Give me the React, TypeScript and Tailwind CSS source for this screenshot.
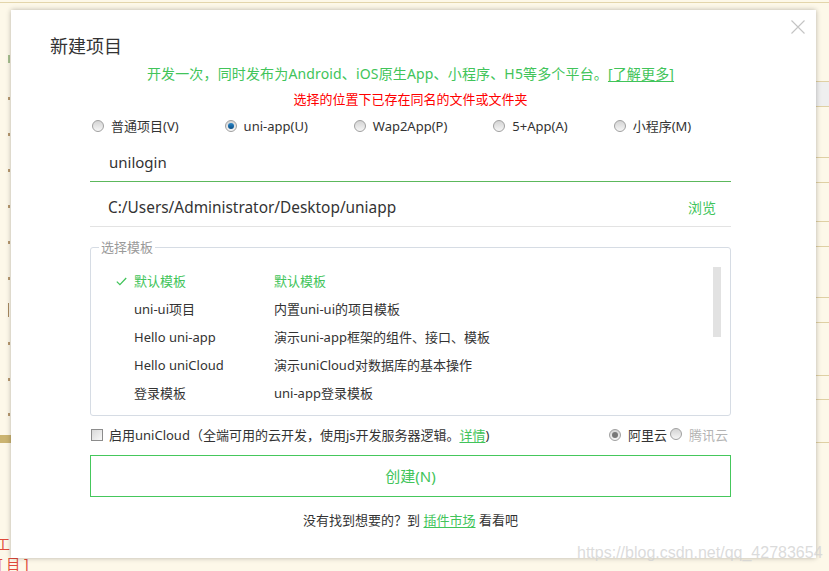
import React from "react";

function Radio({ checked, gray }: { checked?: boolean; gray?: boolean }) {
  return (
    <span className="inline-flex h-[12px] w-[12px] shrink-0 items-center justify-center rounded-full border border-[#a0a0a0] bg-linear-to-b from-[#d4d4d4] to-[#f6f6f6]">
      {checked && (
        <span
          className={
            gray
              ? "h-[6px] w-[6px] rounded-full bg-[#777777]"
              : "h-[6px] w-[6px] rounded-full bg-linear-to-b from-[#2a86c8] to-[#0b4f86]"
          }
        />
      )}
    </span>
  );
}

const templates: [string, string, boolean][] = [
  ["默认模板", "默认模板", true],
  ["uni-ui项目", "内置uni-ui的项目模板", false],
  ["Hello uni-app", "演示uni-app框架的组件、接口、模板", false],
  ["Hello uniCloud", "演示uniCloud对数据库的基本操作", false],
  ["登录模板", "uni-app登录模板", false],
];

const rightLines = [81, 106, 157, 182, 221, 246, 297, 322, 375, 399, 442];
const leftMarks = [97, 133, 169, 205, 241, 277, 342, 378, 413];

export default function App() {
  return (
    <div className="relative h-[571px] w-[829px] overflow-hidden bg-[#fdf8e9] font-['Noto_Sans','Noto_Sans_CJK_SC',sans-serif] text-[#333]">
      {/* background page decorations */}
      <div className="absolute left-0 right-0 top-[2px] h-px bg-[#e3d5ab]" />
      <div className="absolute left-[816px] right-0 top-[82px] h-[24px] bg-[#efefef]" />
      {rightLines.map((y) => (
        <div key={y} className="absolute left-[816px] right-0 h-px bg-[#dfd0a4]" style={{ top: y }} />
      ))}
      {leftMarks.map((y) => (
        <div key={y} className="absolute left-[8px] h-[3px] w-[2px] bg-[#b89a70]" style={{ top: y }} />
      ))}
      <div className="absolute left-[8px] top-[55px] h-[8px] w-[2px] bg-[#a8c090]" />
      <div className="absolute left-[8px] top-[303px] h-[14px] w-[1px] bg-[#a88a60]" />
      <div className="absolute left-0 top-[435px] h-[8px] w-[11px] bg-[#cbb471]" />
      <div className="absolute left-[-4px] top-[535px] text-[14px] leading-[18px] text-[#e04a3a]">工</div>
      <div className="absolute left-[-2px] top-[555px] text-[14px] leading-[18px] text-[#e04a3a]">[ 目 ]</div>

      {/* dialog */}
      <div className="absolute left-[11px] top-[10px] h-[548px] w-[805px] bg-white shadow-[0_0_5px_rgba(0,0,0,0.28)]">
        <div className="absolute right-[11px] top-[10px] h-[14px] w-[14px]">
          <svg width="14" height="14" viewBox="0 0 14 14">
            <path d="M0.5 0.5 L13.5 13.5 M13.5 0.5 L0.5 13.5" stroke="#c4c4c4" strokeWidth="1.1" fill="none" />
          </svg>
        </div>

        <div className="pl-[39px] pt-[24px] text-[18px] leading-[24px] text-[#333]">新建项目</div>

        <div className="ml-[79px] w-[641px]">
          <p className="mt-[6px] text-center text-[14px] leading-[20px] tracking-[0.15px] text-[#41c45a]">
            开发一次，同时发布为Android、iOS原生App、小程序、H5等多个平台。<span className="underline underline-offset-2">[了解更多]</span>
          </p>
          <p className="mt-[5px] text-center text-[13px] leading-[20px] text-[#ff0000]">选择的位置下已存在同名的文件或文件夹</p>

          <div className="mt-[7px] flex h-[20px] items-center gap-[46px] pl-[2px] text-[13px]">
            {[
              ["普通项目(V)", false],
              ["uni-app(U)", true],
              ["Wap2App(P)", false],
              ["5+App(A)", false],
              ["小程序(M)", false],
            ].map(([label, checked]) => (
              <div key={label as string} className="flex items-center gap-[7px]">
                <Radio checked={checked as boolean} />
                <span className="leading-[20px]">{label as string}</span>
              </div>
            ))}
          </div>

          <div className="mt-[7px] flex h-[39px] items-center border-b border-[#5cb85c] pl-[19px] text-[15px] leading-[20px]">
            unilogin
          </div>

          <div className="flex items-start justify-between border-b border-[#e3e3e3] pb-[8px] pl-[18px] pr-[15px] pt-[16px] text-[15.4px] leading-[20px]">
            <span>C:/Users/Administrator/Desktop/uniapp</span>
            <span className="text-[14px] text-[#41c45a]">浏览</span>
          </div>

          <fieldset className="mt-[10px] rounded-[3px] border border-[#d6dce4] p-0">
            <legend className="ml-[8px] px-[2px] text-[13px] leading-[20px] text-[#9a9a9a]">选择模板</legend>
            <div className="relative pb-[8px] pt-[10px] text-[13px]">
              <div className="absolute right-[9px] top-[10px] h-[70px] w-[8px] bg-[#e2e2e2]" />
              {templates.map(([a, b, sel]) => (
                <div
                  key={a}
                  className={sel ? "flex h-[28px] items-center pl-[25px] text-[#41c45a]" : "flex h-[28px] items-center pl-[25px]"}
                >
                  <span className="flex w-[18px] items-center">
                    {sel && (
                      <svg width="11" height="9" viewBox="0 0 11 9">
                        <path d="M0.8 4.6 L3.9 7.6 L10.2 1" stroke="#41c45a" strokeWidth="1.3" fill="none" />
                      </svg>
                    )}
                  </span>
                  <span className="w-[140px] leading-[20px]">{a}</span>
                  <span className="leading-[20px]">{b}</span>
                </div>
              ))}
            </div>
          </fieldset>

          <div className="mt-[9px] flex h-[20px] items-center justify-between pr-[3px] text-[13px] leading-[20px]">
            <div className="flex items-center">
              <span className="ml-px h-[12px] w-[12px] border border-[#8c8c8c] bg-linear-to-br from-[#d8d8d8] to-[#f8f8f8]" />
              <span className="ml-[6px]">
                启用uniCloud（全端可用的云开发，使用js开发服务器逻辑。<span className="text-[#41c45a] underline underline-offset-2">详情</span>)
              </span>
            </div>
            <div className="flex items-center">
              <Radio checked gray />
              <span className="ml-[7px]">阿里云</span>
              <span className="ml-[3px]"><Radio /></span>
              <span className="ml-[7px] text-[#b4b4b4]">腾讯云</span>
            </div>
          </div>

          <div className="mt-[10px] flex h-[42px] items-center justify-center border border-[#45c75c] text-[15px] text-[#41c45a]">
            创建(N)
          </div>

          <p className="mt-[13px] text-center text-[13px] leading-[20px]">
            没有找到想要的？到 <span className="text-[#41c45a] underline underline-offset-2">插件市场</span> 看看吧
          </p>
        </div>
      </div>

      <div className="pointer-events-none absolute left-[577px] top-[543px] font-['Liberation_Sans',sans-serif] text-[16px] leading-[20px] text-[#d2d2d2]/80">
        https://blog.csdn.net/qq_42783654
      </div>
    </div>
  );
}
